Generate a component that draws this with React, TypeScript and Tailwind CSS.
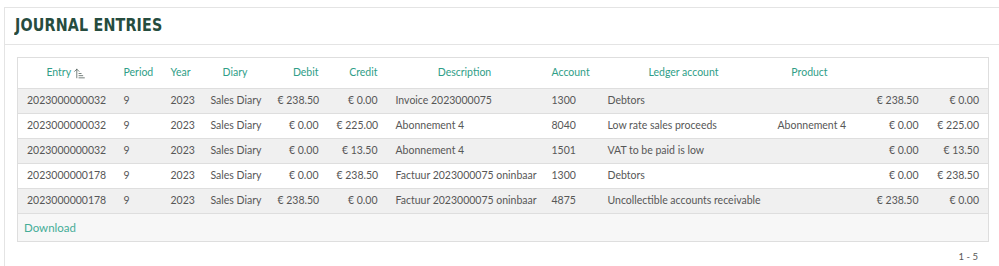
import { ArrowUpNarrowWide } from "lucide-react"

type Row = {
  entry: string
  period: string
  year: string
  diary: string
  debit: string
  credit: string
  description: string
  account: string
  ledger: string
  product: string
  debit2: string
  credit2: string
}

const rows: Row[] = [
  { entry: "2023000000032", period: "9", year: "2023", diary: "Sales Diary", debit: "€ 238.50", credit: "€ 0.00", description: "Invoice 2023000075", account: "1300", ledger: "Debtors", product: "", debit2: "€ 238.50", credit2: "€ 0.00" },
  { entry: "2023000000032", period: "9", year: "2023", diary: "Sales Diary", debit: "€ 0.00", credit: "€ 225.00", description: "Abonnement 4", account: "8040", ledger: "Low rate sales proceeds", product: "Abonnement 4", debit2: "€ 0.00", credit2: "€ 225.00" },
  { entry: "2023000000032", period: "9", year: "2023", diary: "Sales Diary", debit: "€ 0.00", credit: "€ 13.50", description: "Abonnement 4", account: "1501", ledger: "VAT to be paid is low", product: "", debit2: "€ 0.00", credit2: "€ 13.50" },
  { entry: "2023000000178", period: "9", year: "2023", diary: "Sales Diary", debit: "€ 0.00", credit: "€ 238.50", description: "Factuur 2023000075 oninbaar", account: "1300", ledger: "Debtors", product: "", debit2: "€ 0.00", credit2: "€ 238.50" },
  { entry: "2023000000178", period: "9", year: "2023", diary: "Sales Diary", debit: "€ 238.50", credit: "€ 0.00", description: "Factuur 2023000075 oninbaar", account: "4875", ledger: "Uncollectible accounts receivable", product: "", debit2: "€ 238.50", credit2: "€ 0.00" },
]

export default function App() {
  return (
    <div className="w-[999px] h-[266px] overflow-hidden bg-white font-['Lato',sans-serif]">
      <div className="ml-[4px] mt-[7px] border-l border-t border-[#e4e4e4] h-[300px]">
        {/* Title */}
        <div className="h-[37px] flex items-center pl-[10px] border-b border-[#e4e4e4]">
          <h1 className="text-[17px] font-bold tracking-[0.2px] text-[#264c3e] font-['DejaVu_Sans',sans-serif] scale-x-[0.84] origin-left whitespace-nowrap">
            JOURNAL ENTRIES
          </h1>
        </div>

        <div className="pt-[12px] pl-[12px] pr-[11px]">
          <table className="w-[971px] border border-[#dedede] border-collapse table-fixed text-[10.5px] text-[#575757]">
            <colgroup>
              <col className="w-[97px]" />
              <col className="w-[47px]" />
              <col className="w-[40px]" />
              <col className="w-[67px]" />
              <col className="w-[59px]" />
              <col className="w-[59px]" />
              <col className="w-[156px]" />
              <col className="w-[56px]" />
              <col className="w-[170px]" />
              <col className="w-[82px]" />
              <col className="w-[77px]" />
              <col className="w-[61px]" />
            </colgroup>
            <thead>
              <tr className="h-[31px] text-[#2f9e87] border-b border-[#dedede]">
                <th className="font-normal text-center px-[9px]">
                  <span className="inline-flex items-center gap-[2px]">
                    Entry
                    <ArrowUpNarrowWide className="w-[13px] h-[13px] text-[#4b5a55]" strokeWidth={1.4} />
                  </span>
                </th>
                <th className="font-normal text-left px-[9px]">Period</th>
                <th className="font-normal text-left px-[9px]">Year</th>
                <th className="font-normal text-center px-[9px]">Diary</th>
                <th className="font-normal text-right px-[9px]">Debit</th>
                <th className="font-normal text-right px-[9px]">Credit</th>
                <th className="font-normal text-center px-[9px]">Description</th>
                <th className="font-normal text-left px-[9px]">Account</th>
                <th className="font-normal text-center px-[9px]">Ledger account</th>
                <th className="font-normal text-center px-[9px]">Product</th>
                <th className="px-[9px]"></th>
                <th className="px-[9px]"></th>
              </tr>
            </thead>
            <tbody>
              {rows.map((r, i) => (
                <tr key={i} className={`h-[25px] border-b border-[#dedede] ${i % 2 === 0 ? "bg-[#f0f0f0]" : "bg-white"}`}>
                  <td className="px-[9px] whitespace-nowrap">{r.entry}</td>
                  <td className="px-[9px]">{r.period}</td>
                  <td className="px-[9px]">{r.year}</td>
                  <td className="px-[9px] whitespace-nowrap">{r.diary}</td>
                  <td className="px-[9px] text-right whitespace-nowrap">{r.debit}</td>
                  <td className="px-[9px] text-right whitespace-nowrap">{r.credit}</td>
                  <td className="px-[9px] whitespace-nowrap">{r.description}</td>
                  <td className="px-[9px]">{r.account}</td>
                  <td className="px-[9px] whitespace-nowrap">{r.ledger}</td>
                  <td className="px-[9px] text-center whitespace-nowrap">{r.product}</td>
                  <td className="px-[9px] text-right whitespace-nowrap">{r.debit2}</td>
                  <td className="px-[9px] text-right whitespace-nowrap">{r.credit2}</td>
                </tr>
              ))}
              <tr className="h-[28px] bg-[#f7f7f7]">
                <td colSpan={12} className="px-[6px]">
                  <a className="text-[11.5px] text-[#45ad97] cursor-pointer">Download</a>
                </td>
              </tr>
            </tbody>
          </table>
          <div className="w-[971px] flex justify-end pr-[10px] pt-[8px] text-[9.5px] text-[#575757]">
            1 - 5
          </div>
        </div>
      </div>
    </div>
  )
}
